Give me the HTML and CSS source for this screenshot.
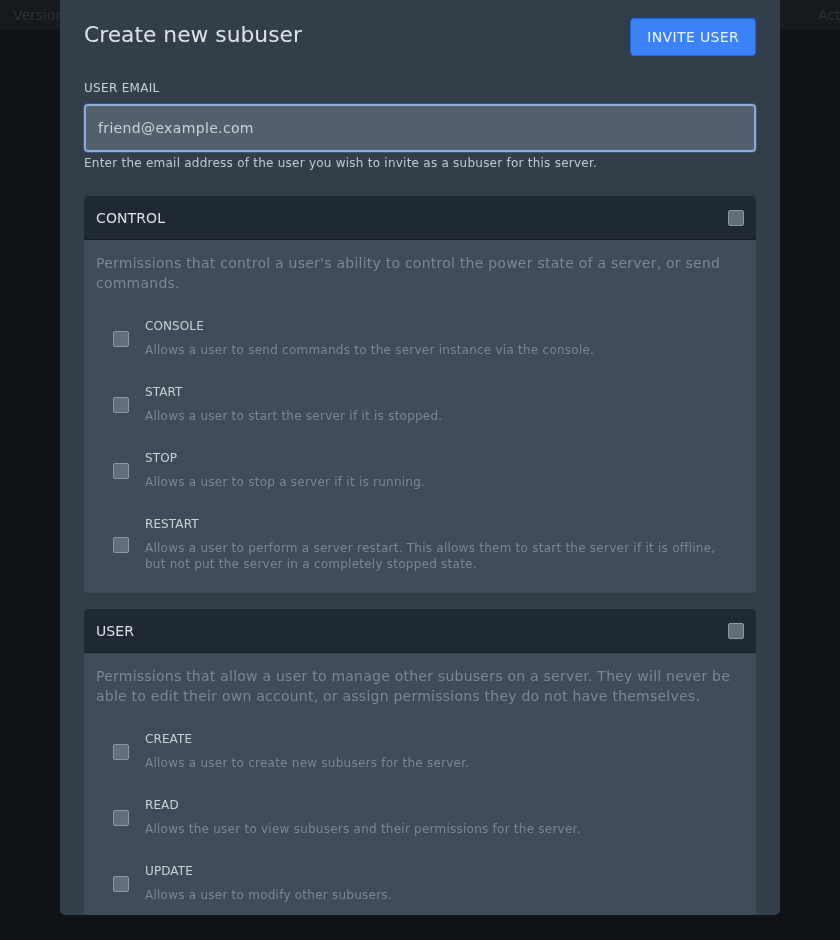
FILE: index.html
```html
<!DOCTYPE html>
<html lang="en">
<head>
<meta charset="utf-8">
<title>Subusers</title>
<link rel="stylesheet" href="styles.css">
</head>
<body>
  <div class="table-head">
    <span class="col col-version">Version</span>
    <span class="col col-actions">Actions</span>
  </div>

  <div class="overlay">
    <div class="modal">
      <div class="modal-head">
        <h2 class="modal-title">Create new subuser</h2>
        <button class="btn-primary" type="button">Invite User</button>
      </div>

      <div class="field">
        <label class="field-label" for="email">User Email</label>
        <input class="field-input" id="email" type="email" value="friend@example.com">
        <p class="field-help">Enter the email address of the user you wish to invite as a subuser for this server.</p>
      </div>

      <div class="perm-groups">
        <section class="perm-card">
          <header class="perm-card-head">
            <span class="perm-card-title">Control</span>
            <span class="checkbox"></span>
          </header>
          <div class="perm-card-body">
            <p class="perm-card-desc">Permissions that control a user's ability to control the power state of a server, or send commands.</p>
            <div class="perm-rows">
              <div class="perm-row">
                <span class="checkbox"></span>
                <div class="perm-text">
                  <div class="perm-name">Console</div>
                  <div class="perm-desc">Allows a user to send commands to the server instance via the console.</div>
                </div>
              </div>
              <div class="perm-row">
                <span class="checkbox"></span>
                <div class="perm-text">
                  <div class="perm-name">Start</div>
                  <div class="perm-desc">Allows a user to start the server if it is stopped.</div>
                </div>
              </div>
              <div class="perm-row">
                <span class="checkbox"></span>
                <div class="perm-text">
                  <div class="perm-name">Stop</div>
                  <div class="perm-desc">Allows a user to stop a server if it is running.</div>
                </div>
              </div>
              <div class="perm-row">
                <span class="checkbox"></span>
                <div class="perm-text">
                  <div class="perm-name">Restart</div>
                  <div class="perm-desc">Allows a user to perform a server restart. This allows them to start the server if it is offline, but not put the server in a completely stopped state.</div>
                </div>
              </div>
            </div>
          </div>
        </section>

        <section class="perm-card">
          <header class="perm-card-head">
            <span class="perm-card-title">User</span>
            <span class="checkbox"></span>
          </header>
          <div class="perm-card-body">
            <p class="perm-card-desc">Permissions that allow a user to manage other subusers on a server. They will never be able to edit their own account, or assign permissions they do not have themselves.</p>
            <div class="perm-rows">
              <div class="perm-row">
                <span class="checkbox"></span>
                <div class="perm-text">
                  <div class="perm-name">Create</div>
                  <div class="perm-desc">Allows a user to create new subusers for the server.</div>
                </div>
              </div>
              <div class="perm-row">
                <span class="checkbox"></span>
                <div class="perm-text">
                  <div class="perm-name">Read</div>
                  <div class="perm-desc">Allows the user to view subusers and their permissions for the server.</div>
                </div>
              </div>
              <div class="perm-row">
                <span class="checkbox"></span>
                <div class="perm-text">
                  <div class="perm-name">Update</div>
                  <div class="perm-desc">Allows a user to modify other subusers.</div>
                </div>
              </div>
            </div>
          </div>
        </section>
      </div>
    </div>
  </div>
</body>
</html>
```

FILE: styles.css
```css
* {
  box-sizing: border-box;
}

html, body {
  margin: 0;
  padding: 0;
  height: 100%;
}

body {
  background: #0f1216;
  font-family: "DejaVu Sans", "Noto Sans", sans-serif;
  overflow: hidden;
}

/* dimmed page behind the dialog */
.table-head {
  display: flex;
  align-items: center;
  height: 30px;
  padding-left: 13px;
  background: #16191d;
  color: #2c3137;
  font-size: 14px;
  overflow: hidden;
}

.col {
  white-space: nowrap;
}

.col-actions {
  margin-left: auto;
  width: 22px;
}

/* dialog layer */
.overlay {
  position: fixed;
  inset: 0;
  display: flex;
  justify-content: center;
  align-items: flex-start;
}

.modal {
  width: 720px;
  height: 915px;
  overflow: hidden;
  background: #323f4b;
  border-radius: 0 0 5px 5px;
  padding: 18px 24px 0;
}

.modal-head {
  display: flex;
  justify-content: space-between;
  align-items: flex-start;
  margin-bottom: 24px;
}

.modal-title {
  margin: 0;
  padding-top: 3px;
  font-size: 21.8px;
  line-height: 28px;
  font-weight: normal;
  color: #dfe3e8;
}

.btn-primary {
  height: 38px;
  padding: 0 16px;
  border: 1px solid #2563eb;
  border-radius: 4px;
  background: #3b82f6;
  color: #eff6ff;
  font-family: inherit;
  font-size: 14px;
  letter-spacing: 0.025em;
  text-transform: uppercase;
}

/* email field */
.field-label {
  display: block;
  margin-bottom: 8px;
  font-size: 12px;
  line-height: 16px;
  letter-spacing: 0.025em;
  text-transform: uppercase;
  color: #cbd2d9;
}

.field-input {
  display: block;
  width: 100%;
  height: 48px;
  padding: 0 12px;
  border: 2px solid #8aabdd;
  border-radius: 4px;
  background: #52606d;
  box-shadow: 0 0 0 1px rgba(96, 165, 250, 0.25);
  color: #cbd2d9;
  font-family: inherit;
  font-size: 14px;
  letter-spacing: 0.025em;
  outline: none;
}

.field-help {
  margin: 3px 0 0;
  font-size: 12px;
  line-height: 16px;
  letter-spacing: 0.24px;
  color: #c3cad2;
}

/* permission groups */
.perm-groups {
  display: flex;
  flex-direction: column;
  gap: 16px;
  margin-top: 25px;
}

.perm-card {
  border-radius: 4px;
  overflow: hidden;
  background: #3e4c59;
}

.perm-card-head {
  display: flex;
  justify-content: space-between;
  align-items: center;
  padding: 12px 12px 11px;
  background: #1f2933;
  border-bottom: 1px solid #151c23;
}

.perm-card-title {
  font-size: 14px;
  line-height: 20px;
  letter-spacing: 0.1px;
  text-transform: uppercase;
  color: #dde1e6;
}

.perm-card-body {
  padding: 13px 12px 8px;
}

.perm-card-desc {
  margin: 0;
  font-size: 14px;
  line-height: 20px;
  letter-spacing: 0.24px;
  color: #7b8794;
}

.perm-rows {
  margin-top: 12px;
}

.perm-row {
  display: flex;
  align-items: center;
  gap: 16px;
  padding: 13px 17px;
}

.perm-row .checkbox {
  margin-top: 2px;
}

.perm-text {
  flex: 1;
}

.perm-name {
  font-size: 12px;
  line-height: 16px;
  margin-bottom: 8px;
  letter-spacing: 0.1px;
  text-transform: uppercase;
  color: #cbd2d9;
}

.perm-desc {
  font-size: 12px;
  line-height: 16px;
  letter-spacing: 0.24px;
  color: #7b8794;
}

.checkbox {
  flex: none;
  width: 16px;
  height: 16px;
  border: 1px solid #8d98a4;
  border-radius: 2px;
  background: #616e7c;
}
```
